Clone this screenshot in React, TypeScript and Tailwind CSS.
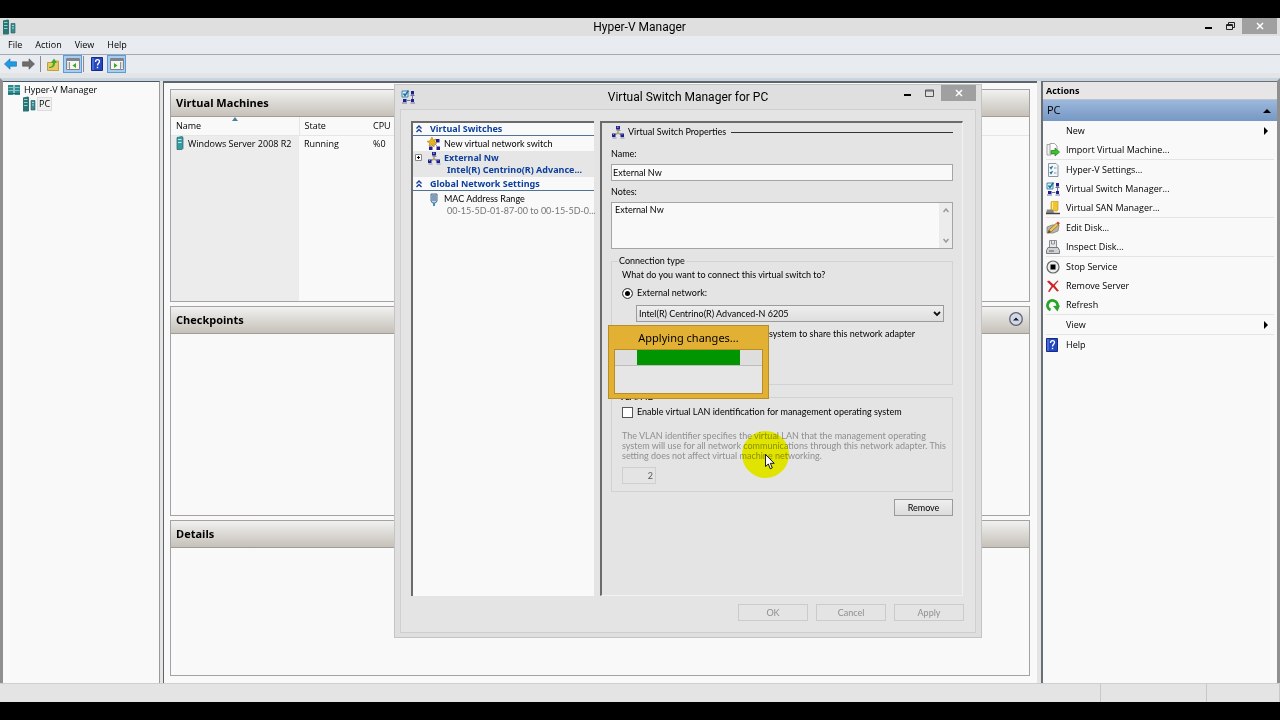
import type { ReactNode } from "react";

const ServerIcon = () => (
  <svg className="shrink-0" width="16" height="16" viewBox="0 0 16 16">
    <path d="M2 1.500 7 .5l1 .8v13.700l-1 .5H2z" fill="#2b7377" />
    <path d="M3 3.500h3.500M3 6.500h3.500M3 9.500h3.500" stroke="#8fd3d0" />
    <path d="M10 4.500h4v9.500h-4z" fill="#3b8b90" stroke="#1f5a60" strokeWidth=".6" />
    <path d="M11 6.500h2M11 9h2" stroke="#9fdcd8" />
  </svg>
);

const ManagerIcon = () => (
  <svg className="shrink-0" width="14" height="12" viewBox="0 0 14 12">
    <path d="M1 1h5.500v10H1zM7.500 1H13v10H7.500z" fill="#2f8a90" />
    <path d="M1.500 3.500H6M8 3.500h4.500M1.500 6.500H6M8 6.500h4.500" stroke="#8ed6d2" strokeWidth=".8" />
    <path d="M1 9.500h12" stroke="#1d6970" />
  </svg>
);

const VmIcon = () => (
  <svg className="shrink-0" width="8" height="14" viewBox="0 0 8 14">
    <path d="M1 1.500 6 .5l1 .8V12.500l-1 1H1z" fill="#3a9aa0" stroke="#24666b" strokeWidth=".7" />
    <path d="M2 3.500h3.500M2 6.500h3.500" stroke="#b5ecea" />
  </svg>
);

const SwitchIcon = () => (
  <svg className="shrink-0" width="14" height="14" viewBox="0 0 14 14">
    <path d="M7 4v4M7 8l-4 2M7 8l4 2" stroke="#a8a27a" strokeWidth="1.500" fill="none" />
    <path d="M5 1h4v3.500H5zM1 8.500h3.500V12H1zM9.500 8.500H13V12H9.500z" fill="#20208c" />
    <path d="M5.500 5.500h4M1.500 13h4M9.500 13h4" stroke="#8d8db4" />
    <path d="M6 1.500h1.500V3H6zM2 9h1v1H2zM10.500 9h1v1h-1z" fill="#7d86e0" />
  </svg>
);

const NewSwitchIcon = () => (
  <svg className="shrink-0" width="14" height="14" viewBox="0 0 14 14">
    <path d="M9 2h3.500v3.500H9zM2 9.500h3.500V13H2zM9.500 9.500H13V13H9.500z" fill="#20208c" />
    <path d="M8 7l3 3M6 8l-2 2" stroke="#8d8db4" />
    <path d="M5 0l1 3 3-1-1.500 2.500L10 6 7.500 7 7 10 5 8 2 9l.8-3L0 4.500l3-.8z" fill="#e8b11e" stroke="#a5760b" strokeWidth=".5" />
  </svg>
);

const SwitchManagerIcon = () => (
  <svg className="shrink-0" width="14" height="14" viewBox="0 0 14 14">
    <path d="M1 1h6v6H1z" fill="#d9eef8" stroke="#3f87ae" />
    <path d="M2.500 3.500 4 5.500 7.500.5" stroke="#1c6ea0" strokeWidth="1.500" fill="none" />
    <path d="M10 1h3v3.500h-3zM2 9h3.500v3H2zM10 9h3v3h-3z" fill="#20208c" />
    <path d="M9.500 5.500h4M1 13h5M9.500 13H14M6 10.500h3.500M11.500 5.500V9" stroke="#6d6dab" />
  </svg>
);

const MacIcon = () => (
  <svg className="shrink-0" width="8" height="13" viewBox="0 0 8 13">
    <path d="M1 1h6v7L5.500 10h-3L1 8z" fill="#c5d3e4" stroke="#4b6a90" />
    <path d="M3 2v6M5 2v6" stroke="#3e6596" />
    <path d="M4 10v3" stroke="#2d9ac4" strokeWidth="2" />
  </svg>
);

const ImportIcon = () => (
  <svg width="14" height="14" viewBox="0 0 14 14">
    <path d="M1 1.500h4V12H1z" fill="#f4f4f4" stroke="#a3a3a3" />
    <path d="M4 .5h4.500l2.500 2.500v8H4z" fill="#fff" stroke="#a3a3a3" />
    <path d="M5 7.500h4V5l4.500 4L9 13v-2.500H5z" fill="#3bc22d" stroke="#1d7f18" strokeWidth=".7" />
  </svg>
);

const SettingsIcon = () => (
  <svg width="14" height="14" viewBox="0 0 14 14">
    <path d="M2.500 .5H10l2 2v11H2.500z" fill="#f3f8fa" stroke="#8b979d" />
    <path d="M4 4l1 1.500L6.500 3M4 9l1 1.500L6.500 8" stroke="#1c6ea0" strokeWidth="1.300" fill="none" />
    <path d="M8 5h2.500M8 10h2.500" stroke="#7ba1b5" />
  </svg>
);

const SanIcon = () => (
  <svg width="14" height="14" viewBox="0 0 14 14">
    <path d="M5 1l1-1h6v9l-1 1H5z" fill="#f1c531" stroke="#ba901a" strokeWidth=".6" />
    <path d="M6.500 1v8" stroke="#fbe894" />
    <path d="M1 8.500h6L8 12H0z" fill="#888" />
    <path d="M0 12.500h14" stroke="#444" strokeWidth="1.500" />
  </svg>
);

const EditDiskIcon = () => (
  <svg width="14" height="14" viewBox="0 0 14 14">
    <path d="M1 6l5-2h7l-1 6-5 2H1z" fill="#b7b7ad" stroke="#77776c" strokeWidth=".7" />
    <path d="M2 11.500 3 9l7.500-7 2 2L5 11z" fill="#efc65b" stroke="#8a641c" strokeWidth=".7" />
    <path d="M10.500 2 12 .5l1.800 1.700L12.500 4z" fill="#c23b33" />
    <path d="M1.500 12.500 3 9l2 2z" fill="#6a4b22" />
  </svg>
);

const InspectDiskIcon = () => (
  <svg width="14" height="14" viewBox="0 0 14 14">
    <path d="M3.500 .5h7v7h-7z" fill="#e5e8ea" stroke="#8b8f93" />
    <path d="M5.500 1v3h3V1" fill="none" stroke="#8b8f93" />
    <path d="M2 7.500h10l1.500 3v3H.5v-3z" fill="#cfd3d6" stroke="#777b7f" />
    <path d="M3 11h5" stroke="#5b5f63" />
  </svg>
);

const StopIcon = () => (
  <svg width="14" height="14" viewBox="0 0 14 14">
    <circle cx="7" cy="7" r="6" fill="#eee" stroke="#666" strokeWidth="1.200" />
    <path d="M4.500 4.500h5v5h-5z" fill="#000" />
  </svg>
);

const RemoveIcon = () => (
  <svg width="14" height="14" viewBox="0 0 14 14">
    <path d="M1 2.500 3 1.500l4.500 4 4-4 1 .5-3.800 4.500L13 12l-2 .5-4-4.500-3.500 5-1.500-.5L5.500 7z" fill="#cc2428" />
  </svg>
);

const RefreshIcon = () => (
  <svg width="14" height="14" viewBox="0 0 14 14">
    <path d="M4.500 12A5 5 0 1 1 11.500 8" stroke="#27a527" strokeWidth="2.800" fill="none" />
    <path d="M7 8l7-.5-2.500 6z" fill="#27a527" />
  </svg>
);

const HelpIcon = () => (
  <svg width="12" height="14" viewBox="0 0 12 14">
    <path d="M.5 .5h11v13H.5z" fill="#2548c0" stroke="#132a86" />
    <path d="M2 1v12" stroke="#6f8ce6" />
    <path d="M4.500 5c0-3 4-3 4-.5 0 1.800-2 1.800-2 4" stroke="#fff" strokeWidth="1.300" fill="none" />
    <path d="M5.800 9.800h1.400v1.400H5.800z" fill="#fff" />
  </svg>
);

const FolderUpIcon = () => (
  <svg width="12" height="13" viewBox="0 0 12 13">
    <path d="M.5 4.500h4l1-1.500h6v9.500H.5z" fill="#ecc95c" stroke="#b48f2b" strokeWidth=".8" />
    <path d="M2 9c3 0 4-2 4-4H4L7 .5 10 5H8c0 3-2 5-6 5z" fill="#3cab2c" />
  </svg>
);

const PaneIcon = ({ right = false }: { right?: boolean }) => (
  <svg width="14" height="12" viewBox="0 0 14 12">
    <path d="M.5 .5h13v11H.5z" fill="#f5f5f2" stroke="#7f8489" />
    <path d="M1 2h12" stroke="#7d868f" strokeWidth="2" />
    <path d={right ? "M10.500 4v7M11.500 5h1M11.500 7h1M11.500 9h1" : "M3.500 4v7M1.500 5h1M1.500 7h1M1.500 9h1"} stroke="#8c9399" />
    <path d={right ? "M4 5l3.500 2.500L4 10z" : "M10 5 6.500 7.500 10 10z"} fill="#3ba526" />
  </svg>
);

const ArrowIcon = ({ forward = false }: { forward?: boolean }) =>
  forward ? (
    <svg width="13" height="12" viewBox="0 0 13 12">
      <path d="M12.500 6 7 .8v3H.5v4.400H7v3z" fill="#6d6d6d" stroke="#555" strokeWidth=".6" />
    </svg>
  ) : (
    <svg width="13" height="12" viewBox="0 0 13 12">
      <path d="M.5 6 6 .8v3h6.500v4.400H6v3z" fill="#1f9be4" stroke="#0e6cad" strokeWidth=".6" />
    </svg>
  );

const Triangle = ({ up = false }: { up?: boolean }) => (
  <svg width="8" height="8" viewBox="0 0 8 8">
    <path d={up ? "M0 6h8L4 2z" : "M2 0v8l4-4z"} fill="#000" />
  </svg>
);

const DoubleChevron = () => (
  <svg className="shrink-0" width="6" height="8" viewBox="0 0 6 8">
    <path d="M.5 3.500 3 1l2.500 2.500M.5 7 3 4.500 5.500 7" stroke="#123c94" strokeWidth="1.300" fill="none" />
  </svg>
);

const WindowButtons = ({ restore = false }: { restore?: boolean }) => (
  <div className="flex items-start self-start">
    <button aria-label="Minimize" className="flex h-4 w-5 items-center justify-center">
      <svg width="7" height="8" viewBox="0 0 7 8">
        <path d="M0 6h7" stroke="#000" strokeWidth="2" />
      </svg>
    </button>
    <button aria-label="Maximize" className="flex h-4 w-6 items-center justify-center">
      <svg width="9" height="8" viewBox="0 0 9 8">
        {restore ? (
          <path d="M.5 2.500h6v5h-6zM2.500 2V.5h6v5H7M.5 3.500h6" stroke="#222" fill="none" />
        ) : (
          <path d="M.5 1h8v6.500h-8zM.5 2h8" stroke="#555" fill="none" />
        )}
      </svg>
    </button>
    <button aria-label="Close" className="flex h-4 w-[35px] items-center justify-center bg-[#a0a0a0]">
      <svg width="8" height="8" viewBox="0 0 8 8">
        <path d="M1 1l6 6M7 1 1 7" stroke="#fff" strokeWidth="1.500" />
      </svg>
    </button>
  </div>
);

type Action = { label: string; icon?: ReactNode; arrow?: boolean };

const actionGroups: Action[][] = [
  [
    { label: "New", arrow: true },
    { label: "Import Virtual Machine...", icon: <ImportIcon /> },
  ],
  [
    { label: "Hyper-V Settings...", icon: <SettingsIcon /> },
    { label: "Virtual Switch Manager...", icon: <SwitchManagerIcon /> },
    { label: "Virtual SAN Manager...", icon: <SanIcon /> },
  ],
  [
    { label: "Edit Disk...", icon: <EditDiskIcon /> },
    { label: "Inspect Disk...", icon: <InspectDiskIcon /> },
  ],
  [
    { label: "Stop Service", icon: <StopIcon /> },
    { label: "Remove Server", icon: <RemoveIcon /> },
    { label: "Refresh", icon: <RefreshIcon /> },
  ],
  [{ label: "View", arrow: true }],
  [{ label: "Help", icon: <HelpIcon /> }],
];

const Toolbar = () => (
  <div className="flex h-[19px] shrink-0 items-center border-t border-[#a5a9ad] bg-[#e8ebef] pl-1">
    <button aria-label="Back"><ArrowIcon /></button>
    <button aria-label="Forward" className="ml-[5px]"><ArrowIcon forward /></button>
    <span className="mx-[5px] h-4 w-px bg-[#8c8c8c]" />
    <button aria-label="Up" className="ml-px"><FolderUpIcon /></button>
    <button aria-label="Show console tree" className="ml-1 flex h-[18px] w-[19px] items-center justify-center border border-[#5b9bd8] bg-[#a9cdf0]">
      <PaneIcon />
    </button>
    <span className="mr-[7px] ml-px h-4 w-px bg-[#8c8c8c]" />
    <button aria-label="Help"><HelpIcon /></button>
    <button aria-label="Show action pane" className="ml-1 flex h-[18px] w-[19px] items-center justify-center border border-[#5b9bd8] bg-[#a9cdf0]">
      <PaneIcon right />
    </button>
  </div>
);

const ConsoleTree = () => (
  <nav className="w-[157px] shrink-0 border-t border-r border-t-[#4c5560] border-r-[#999] bg-[#f9f9f9] pt-px pl-1">
    <div className="flex h-[14px] items-center gap-[3px]">
      <ManagerIcon />
      Hyper-V Manager
    </div>
    <div className="flex h-[14px] items-center pl-[14px]">
      <ServerIcon />
      <span className="border border-[#dcdcdc] bg-[#efefef] px-px leading-[12px]">PC</span>
    </div>
  </nav>
);

type SectionProps = { title: string; collapsible?: boolean; children?: ReactNode };

const Section = ({ title, collapsible = false, children }: SectionProps) => (
  <section className="flex min-h-0 flex-col border border-[#a3a3a3]">
    <header className="flex h-[27px] shrink-0 items-center justify-between border-b border-[#a09c96] bg-linear-to-b from-[#f1f1f0] to-[#c6c1b9] px-[5px]">
      <h2 className="text-[11px] font-bold">{title}</h2>
      {collapsible && (
        <button aria-label={"Collapse " + title}>
          <svg width="16" height="16" viewBox="0 0 16 16">
            <circle cx="8" cy="7" r="6.300" fill="#d5d8e2" stroke="#5c6478" strokeWidth="1.300" />
            <path d="M5 8.500h6l-3-3z" fill="#111c3c" />
          </svg>
        </button>
      )}
    </header>
    {children}
  </section>
);

const MachineTable = () => (
  <table className="w-full flex-1 table-fixed text-left">
    <thead>
      <tr className="h-[18px] border-b border-[#e6e6e6]">
        <th className="relative w-[128px] border-r border-[#e6e6e6] pl-[5px] font-normal">
          Name
          <svg className="absolute top-0 left-[61px]" width="6" height="4" viewBox="0 0 6 4">
            <path d="M0 4h6L3 0z" fill="#4b7f9c" />
          </svg>
        </th>
        <th className="w-[69px] pl-[5px] font-normal">State</th>
        <th className="pl-[5px] font-normal">CPU</th>
      </tr>
    </thead>
    <tbody>
      <tr className="h-4">
        <td className="bg-[#ececec] pl-[5px]">
          <span className="flex items-center gap-1 whitespace-nowrap">
            <VmIcon />
            Windows Server 2008 R2
          </span>
        </td>
        <td className="pl-[5px]">Running</td>
        <td className="pl-[5px]">%0</td>
      </tr>
      <tr>
        <td className="bg-[#ececec]" />
        <td />
        <td />
      </tr>
    </tbody>
  </table>
);

const ActionsPane = () => (
  <aside className="flex w-[236px] shrink-0 flex-col border-t border-l-2 border-[#6a6f76] bg-[#f9f9f9]">
    <h2 className="h-[17px] bg-[#e7e5e5] pl-[3px] leading-[18px] font-bold">Actions</h2>
    <button className="flex h-[22px] items-center justify-between border-t border-[#b9c3cf] bg-linear-to-b from-[#9cb8dc] to-[#7698c4] pr-[6px] pl-1 text-[11px]">
      PC
      <Triangle up />
    </button>
    {actionGroups.map((group, i) => (
      <div key={i} className="mx-[3px] border-b border-[#e4e4e4] last:border-b-0">
        {group.map((action) => (
          <button key={action.label} className="flex h-[19px] w-full items-center pr-1 text-left">
            <span className="flex w-[20px] shrink-0">{action.icon}</span>
            <span className="flex-1">{action.label}</span>
            {action.arrow && <Triangle />}
          </button>
        ))}
      </div>
    ))}
  </aside>
);

const SwitchTree = () => (
  <div className="w-[183px] shrink-0 border-t-2 border-l-2 border-[#6b6b6b] bg-[#f9f9f9] leading-[12px]">
    <div className="flex h-[13px] items-center gap-2 border-b border-[#4f7396] pl-[3px] font-['Noto_Sans',sans-serif] font-bold text-[#0b3f9e]">
      <DoubleChevron />
      Virtual Switches
    </div>
    <div className="flex h-[15px] items-center gap-[3px] pl-[14px]">
      <NewSwitchIcon />
      New virtual network switch
    </div>
    <div className="flex h-[26px] items-start bg-[#e6e6e6] pl-[2px] font-['Noto_Sans',sans-serif] font-bold text-[#0b3f9e]">
      <svg className="mt-[3px] mr-[5px] shrink-0" width="7" height="7" viewBox="0 0 7 7">
        <path d="M.5 .5h6v6h-6z" fill="#fff" stroke="#888" />
        <path d="M2 3.500h3M3.500 2v3" stroke="#000" />
      </svg>
      <SwitchIcon />
      <div className="min-w-0 pt-px pl-[3px] whitespace-nowrap">
        <div>External Nw</div>
        <div className="pl-[3px]">Intel(R) Centrino(R) Advance...</div>
      </div>
    </div>
    <div className="flex h-[14px] items-center gap-2 border-b border-[#4f7396] pl-[3px] font-['Noto_Sans',sans-serif] font-bold text-[#0b3f9e]">
      <DoubleChevron />
      Global Network Settings
    </div>
    <div className="flex items-start gap-[6px] pt-[2px] pl-[17px]">
      <MacIcon />
      <div className="whitespace-nowrap">
        <div>MAC Address Range</div>
        <div className="pl-[3px] text-[#777]">00-15-5D-01-87-00 to 00-15-5D-0...</div>
      </div>
    </div>
  </div>
);

const SwitchForm = () => (
  <form className="min-w-0 flex-1 border-t-2 border-r border-b border-l-2 border-t-[#6b6b6b] border-r-[#f2f2f2] border-b-[#f2f2f2] border-l-[#6b6b6b] px-[9px] leading-[12px]">
    <div className="flex h-[18px] items-center gap-[3px]">
      <SwitchIcon />
      <span className="pr-[2px]">Virtual Switch Properties</span>
      <span className="h-px flex-1 bg-[#333]" />
    </div>
    <label htmlFor="name" className="mt-[7px] block">Name:</label>
    <input id="name" defaultValue="External Nw" className="mt-1 block h-[17px] w-full border border-[#a5a5a5] bg-[#f9f9f9] px-px" />
    <label htmlFor="notes" className="mt-[5px] block">Notes:</label>
    <div className="mt-1 flex h-[47px] border border-[#a5a5a5] bg-[#f9f9f9]">
      <textarea id="notes" defaultValue="External Nw" className="flex-1 resize-none px-[3px] py-px" />
      <div className="flex w-[13px] flex-col items-center justify-between bg-[#ececec] py-[5px]">
        <svg width="6" height="5" viewBox="0 0 6 5"><path d="M.5 4 3 1l2.500 3" stroke="#999" strokeWidth="1.500" fill="none" /></svg>
        <svg width="6" height="5" viewBox="0 0 6 5"><path d="M.5 1 3 4l2.500-3" stroke="#999" strokeWidth="1.500" fill="none" /></svg>
      </div>
    </div>
    <fieldset className="mt-[6px] h-[130px] min-w-0 border border-[#d2d2d2] pr-2 pl-[10px]">
      <legend className="-ml-1 px-px">Connection type</legend>
      <p className="mt-[2px]">What do you want to connect this virtual switch to?</p>
      <label className="mt-[6px] flex items-center gap-1">
        <input type="radio" name="connection" defaultChecked className="size-[11px] appearance-none rounded-full border border-[#555] bg-black shadow-[inset_0_0_0_2px_#fff]" />
        External network:
      </label>
      <div className="relative mt-[6px] ml-[14px]">
        <select aria-label="Network adapter" className="block h-[17px] w-full appearance-none border border-[#9b9b9b] bg-linear-to-b from-[#eeeeee] to-[#dedede] px-[2px]">
          <option>Intel(R) Centrino(R) Advanced-N 6205</option>
        </select>
        <svg className="pointer-events-none absolute top-[6px] right-[3px]" width="8" height="6" viewBox="0 0 8 6">
          <path d="M1 1l3 3 3-3" stroke="#111" strokeWidth="1.800" fill="none" />
        </svg>
      </div>
      <label className="mt-[6px] ml-[14px] flex items-center gap-1 whitespace-nowrap">
        <input type="checkbox" className="size-[11px] shrink-0 appearance-none border border-[#555] bg-white" />
        Allow management operating system to share this network adapter
      </label>
    </fieldset>
    <fieldset className="mt-[6px] h-[101px] min-w-0 border border-[#d2d2d2] pr-2 pl-[10px]">
      <legend className="-ml-1 px-px">VLAN ID</legend>
      <label className="mt-[3px] flex items-center gap-1 whitespace-nowrap">
        <input type="checkbox" className="size-[11px] shrink-0 appearance-none border border-[#555] bg-white" />
        Enable virtual LAN identification for management operating system
      </label>
      <p className="mt-[13px] leading-[10px] whitespace-nowrap text-[#8f8f8f]">
        The VLAN identifier specifies the virtual LAN that the management operating
        <br />
        system will use for all network communications through this network adapter. This
        <br />
        setting does not affect virtual machine networking.
      </p>
      <input aria-label="VLAN identifier" disabled defaultValue="2" className="mt-[6px] block h-[17px] w-[34px] border border-[#cfcfcf] px-[2px] text-right text-[#555]" />
    </fieldset>
    <button type="button" className="mt-[7px] ml-auto block h-[17px] w-[59px] border border-[#9b9b9b] bg-linear-to-b from-[#efefef] to-[#dcdcdc]">
      Remove
    </button>
  </form>
);

const ApplyingPopup = () => (
  <div role="status" className="absolute top-[240px] left-[213px] h-[74px] w-[161px] border border-[#b68d26] bg-[#e2b033] px-[5px]">
    <p className="h-[23px] text-center font-['Noto_Sans',sans-serif] text-[11px] leading-[23px]">Applying changes...</p>
    <div className="h-[45px] border border-[#b68d26] bg-[#e6e6e6]">
      <div className="h-[16px] border-b border-[#bcbcbc] bg-[#dedede] px-[22px]">
        <div className="h-[15px] bg-[#029502]" />
      </div>
    </div>
  </div>
);

const Pointer = () => (
  <>
    <div className="pointer-events-none absolute top-[346px] left-[347px] size-[47px] rounded-full bg-[#fbff00] mix-blend-multiply" />
    <svg className="pointer-events-none absolute top-[369px] left-[370px]" width="10" height="16" viewBox="0 0 10 16">
      <path d="M.5 .5v12L3.300 10l2 4.800 2-.9-2-4.600h3.900z" fill="#fff" stroke="#000" strokeWidth=".9" />
    </svg>
  </>
);

const SwitchManagerDialog = () => (
  <div role="dialog" aria-label="Virtual Switch Manager for PC" className="absolute top-[66px] left-[394px] flex h-[554px] w-[588px] flex-col border border-[#c4c4c4] bg-[#dfdfdf] px-[5px] pb-1 font-[Lato,sans-serif]">
    <header className="flex h-6 shrink-0 items-center pl-px">
      <SwitchManagerIcon />
      <h1 className="flex-1 pl-16 text-center font-[Roboto,sans-serif] text-[12px]">Virtual Switch Manager for PC</h1>
      <WindowButtons />
    </header>
    <div className="flex flex-1 flex-col border border-[#cfcfcf] bg-[#e4e4e4] pt-[11px] pr-[11px] pl-[10px]">
      <div className="flex h-[475px] gap-[6px] pr-px">
        <SwitchTree />
        <SwitchForm />
      </div>
      <div className="mt-2 flex justify-end gap-2">
        {["OK", "Cancel", "Apply"].map((label) => (
          <button key={label} disabled className="h-[17px] w-[70px] border border-[#cbcbcb] text-[#8f8f8f]">
            {label}
          </button>
        ))}
      </div>
    </div>
    <ApplyingPopup />
    <Pointer />
  </div>
);

export default function App() {
  return (
    <div className="flex h-screen flex-col bg-black py-[18px] font-['Open_Sans','Noto_Sans',sans-serif] text-[9px] text-black">
      <div className="relative flex min-h-0 flex-1 flex-col bg-[#e8ebef]">
        <header className="flex h-[18px] shrink-0 items-center bg-[#dfdfdf] pr-[3px] pl-px">
          <ServerIcon />
          <h1 className="flex-1 pl-16 text-center font-[Roboto,sans-serif] text-[12px]">Hyper-V Manager</h1>
          <WindowButtons restore />
        </header>
        <div className="flex h-[18px] shrink-0 items-center gap-[13px] pl-2">
          {["File", "Action", "View", "Help"].map((item) => (
            <button key={item}>{item}</button>
          ))}
        </div>
        <Toolbar />
        <div className="h-[5px] shrink-0 bg-[#e2e4e6]" />
        <main className="flex min-h-0 flex-1 border-x-[3px] border-t-[3px] border-x-[#8f8f8f] border-t-[#c8d4e0] bg-[#e4e4e4]">
          <ConsoleTree />
          <div className="ml-[3px] grid min-w-0 flex-1 grid-rows-[213fr_210fr_156fr] gap-1 border-t-2 border-l border-[#5f646b] bg-[#f9f9f9] pt-[6px] pr-[7px] pb-[7px] pl-[6px]">
            <Section title="Virtual Machines">
              <MachineTable />
            </Section>
            <Section title="Checkpoints" collapsible />
            <Section title="Details" />
          </div>
          <div className="w-1" />
          <ActionsPane />
        </main>
        <footer className="flex h-[19px] shrink-0 justify-end border-t border-[#cfcfcf] bg-[#e4e4e4]">
          <span className="w-[106px] border-l border-[#c8c8c8]" />
          <span className="w-[74px] border-x border-[#c8c8c8]" />
        </footer>
        <SwitchManagerDialog />
      </div>
    </div>
  );
}
